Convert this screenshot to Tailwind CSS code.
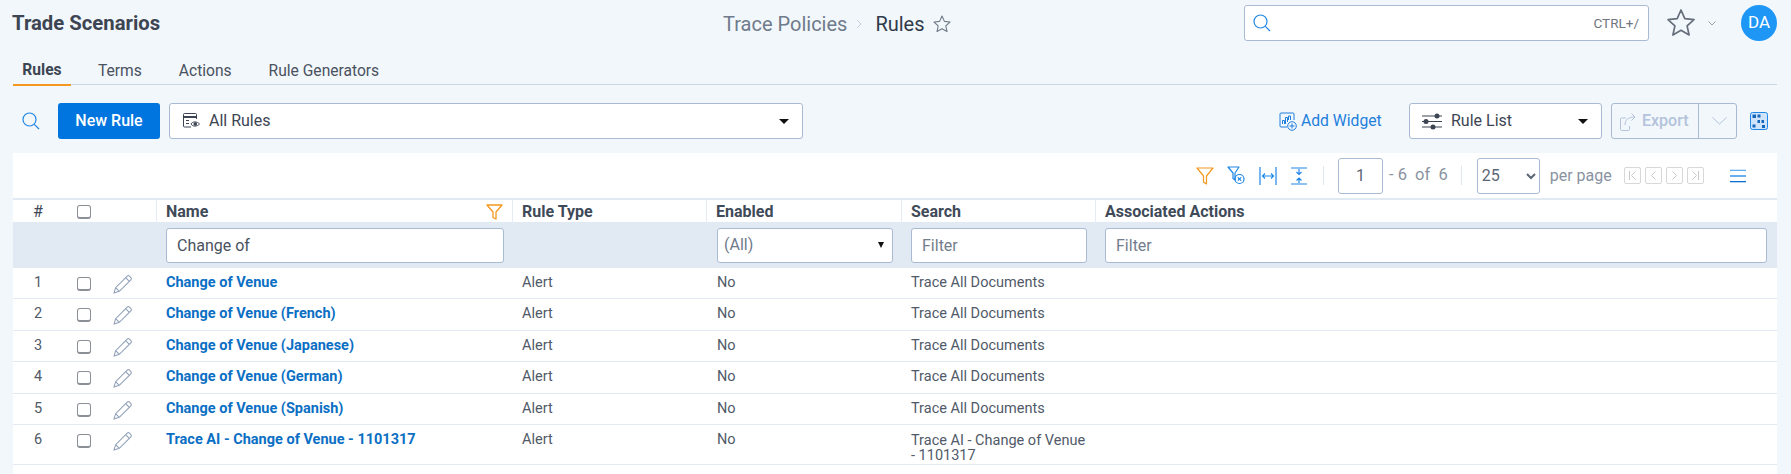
<!DOCTYPE html>
<html lang="en">
<head>
    <meta charset="UTF-8">
    <title>Trade Scenarios - Rules</title>
    <script src="https://cdn.jsdelivr.net/npm/@tailwindcss/browser@4"></script>
</head>
<body class="bg-[#f2f7fb] font-['Roboto',sans-serif] text-[#3d4553] overflow-hidden h-[474px]">
    <div class="pl-[13px] pr-[14px]">
        <!-- Top bar -->
        <header class="flex items-center h-[36px] mt-[5px]">
            <h1 class="w-[711px] -ml-px text-[20.3px] font-bold text-[#3d4553] whitespace-nowrap">Trade Scenarios</h1>
            <nav class="flex items-center w-[521px] text-[20px] pt-[1px]">
                <span class="text-[#6f7a8b]">Trace Policies</span>
                <svg class="w-[6px] h-[10px] ml-[9px] mr-[13px]" viewBox="0 0 6 10" fill="none" stroke="#c6d0de"><path d="M1 1l4 4-4 4"/></svg>
                <span class="text-[#2f3a4a]">Rules</span>
                <svg class="w-[18px] h-[18px] ml-[8px]" viewBox="0 0 18 18" fill="none" stroke="#717a88" stroke-width="1.1" stroke-linejoin="round"><path d="M9 1l2.4 5.4 5.6.6-4.2 3.8 1.2 5.7L9 13.7l-5 2.8 1.2-5.7L1 7l5.600-.6z"/></svg>
            </nav>
            <div class="flex items-center w-[405px] h-[36px] bg-white border border-[#a9bbd3] rounded-[3px] pl-[8px] pr-[9px]">
                <svg class="w-[18px] h-[18px] text-[#1f86e6]" viewBox="0 0 18 18" fill="none" stroke="currentColor" stroke-width="1.2"><circle cx="7.5" cy="7.5" r="6.5"/><path d="M12.3 12.3L17 17"/></svg>
                <span class="ml-auto text-[13.5px] text-[#6f7682]">CTRL+/</span>
            </div>
            <svg class="w-[30px] h-[30px] ml-[17px]" viewBox="0 0 30 30" fill="none" stroke="#666e7b" stroke-width="1.7" stroke-linejoin="round"><path d="M15 2l3.8 8.7 9.2 1-6.9 6.2 2 9.1-8.1-4.7L6.900 27l2-9.100L2 11.700l9.200-1z"/></svg>
            <svg class="w-[8px] h-[5px] ml-[12px]" viewBox="0 0 8 5" fill="none" stroke="#9aa3b0"><path d="M.5.5L4 4 7.500.5"/></svg>
            <div class="flex items-center justify-center w-[36px] h-[36px] ml-auto rounded-full bg-[#1e96f5] text-white text-[17px]">DA</div>
        </header>

        <!-- Tabs -->
        <div class="flex h-[44px] border-b border-[#c9d8e8] text-[15.6px] text-[#4a5260]">
            <a class="flex items-center justify-center w-[58px] pt-[16px] h-[45px] font-bold text-[#3d4553] border-b-2 border-[#f6981e]">Rules</a>
            <a class="flex items-center pt-[17px] h-[44px] ml-[27px]">Terms</a>
            <a class="flex items-center pt-[17px] h-[44px] ml-[37px]">Actions</a>
            <a class="flex items-center pt-[17px] h-[44px] ml-[37px]">Rule Generators</a>
        </div>

        <!-- Toolbar -->
        <div class="flex items-center h-[36px] mt-[18px]">
            <svg class="w-[18px] h-[18px] ml-[9px] text-[#1f86e6]" viewBox="0 0 18 18" fill="none" stroke="currentColor" stroke-width="1.2"><circle cx="7.500" cy="7.500" r="6.500"/><path d="M12.300 12.300L17 17"/></svg>
            <button class="w-[102px] h-[36px] ml-[18px] bg-[#0075df] text-white text-[16px] font-medium rounded-[3px]">New Rule</button>
            <div class="flex items-center w-[634px] h-[36px] ml-[9px] bg-white border border-[#a9bbd3] rounded-[3px] pl-[12px] pr-[13px] text-[16px]">
                <svg class="w-[19px] h-[18px] text-[#3d4553]" viewBox="0 0 19 18" fill="none" stroke="currentColor"><path d="M9 15H2.500a1 1 0 0 1-1-1V2.500a1 1 0 0 1 1-1h11a1 1 0 0 1 1 1V7"/><path d="M1.500 5h13" stroke-width="2"/><path d="M4 8.500h3M4 11.500h3"/><path d="M9 12c1.500-2.800 6-2.800 8.500 0-2.500 2.800-7 2.800-8.500 0z"/><circle cx="13.200" cy="12" r="1.300" fill="currentColor"/></svg>
                <span class="ml-[8px]">All Rules</span>
                <span class="ml-auto w-0 h-0 border-x-[5px] border-x-transparent border-t-[5px] border-t-[#111]"></span>
            </div>
            <svg class="w-[18px] h-[19px] ml-[476px] text-[#1f7fdc]" viewBox="0 0 18 19" fill="none" stroke="currentColor"><path d="M8 15H2a1 1 0 0 1-1-1V2a1 1 0 0 1 1-1h12a1 1 0 0 1 1 1v6"/><path d="M3.500 12V8.500h2V12M6.500 12V5.500h2V10M9.500 8V4h2v4" stroke-width="1"/><circle cx="13" cy="14" r="4.300"/><path d="M13 11.500v5M10.500 14h5"/></svg>
            <span class="ml-[4px] w-[108px] text-[15.7px] text-[#1f7fdc] whitespace-nowrap">Add Widget</span>
            <div class="flex items-center w-[193px] h-[36px] bg-white border border-[#a9bbd3] rounded-[3px] pl-[12px] pr-[13px] text-[16px]">
                <svg class="w-[20px] h-[17px] text-[#3d4553]" viewBox="0 0 20 17" fill="none" stroke="currentColor" stroke-width="1.200"><path d="M0 3h20M0 14h20M0 8.500h20"/><circle cx="15" cy="3" r="2.500" fill="currentColor" stroke="none"/><circle cx="4" cy="8.500" r="2.500" fill="currentColor" stroke="none"/><circle cx="11" cy="14" r="2.500" fill="currentColor" stroke="none"/></svg>
                <span class="ml-[9px]">Rule List</span>
                <span class="ml-auto w-0 h-0 border-x-[5px] border-x-transparent border-t-[5px] border-t-[#111]"></span>
            </div>
            <div class="flex items-center w-[126px] h-[36px] ml-[9px] border border-[#a9bbd3] rounded-[3px] text-[16px] text-[#b3c3db]">
                <div class="flex items-center w-[87px] h-full pl-[8px] border-r border-[#a9bbd3]">
                    <svg class="w-[16px] h-[19px]" viewBox="0 0 16 19" fill="none" stroke="currentColor"><path d="M6 6H1.500a1 1 0 0 0-1 1v10.500a1 1 0 0 0 1 1h7a1 1 0 0 0 1-1V14"/><path d="M5 13c0-5 3-8 10-8M11.500 1.500L15 5l-3.500 3.500"/></svg>
                    <span class="ml-[6px] font-medium">Export</span>
                </div>
                <svg class="w-[15px] h-[8px] ml-[13px]" viewBox="0 0 15 8" fill="none" stroke="currentColor"><path d="M.5.500L7.500 7l7-6.500"/></svg>
            </div>
            <svg class="w-[18px] h-[18px] ml-[13px]" viewBox="0 0 18 18"><rect x=".500" y=".500" width="17" height="17" rx="2" fill="#cfe4fb" stroke="#1f86e6"/><path d="M2.500 2.500h3.500v3.500H2.500zM7.500 2.500h3v3h-3zM11.500 8h2.500v3h-2.500zM7.500 8h2.500v3H7.500zM2.500 12.500h3v3h-3zM12 13h3v3h-3z" fill="#1565b8"/></svg>
        </div>

        <!-- Grid card -->
        <section class="mt-[14px] bg-white h-[321px]">
            <!-- Pager row -->
            <div class="flex items-center h-[47px] border-b-2 border-[#e1e9f3] pl-[1183px] text-[16px] text-[#8a93a1]">
                <svg class="w-[18px] h-[18px]" viewBox="0 0 18 18" fill="none" stroke="#f6981e" stroke-width="1.200" stroke-linejoin="round"><path d="M1 1h16l-6.500 8v8l-3-2V9z"/></svg>
                <svg class="w-[18px] h-[19px] ml-[13px] text-[#1f86e6]" viewBox="0 0 18 19" fill="none" stroke="currentColor" stroke-width="1.200" stroke-linejoin="round"><path d="M1 1h11L8 7v7l-2-1.500V7z"/><circle cx="12.500" cy="13" r="4.500"/><path d="M10.800 11.300l3.400 3.400M14.200 11.300l-3.400 3.400"/></svg>
                <svg class="w-[18px] h-[18px] ml-[14px] text-[#1f86e6]" viewBox="0 0 18 18" fill="none" stroke="currentColor" stroke-width="1.200"><path d="M1 0v18M17 0v18M4 9h10M6 6.500L3.500 9 6 11.500M12 6.500L14.500 9 12 11.500"/></svg>
                <svg class="w-[18px] h-[18px] ml-[13px] text-[#1f86e6]" viewBox="0 0 18 18" fill="none" stroke="currentColor" stroke-width="1.200"><path d="M1 1h16M1 17h16M9 2v5M9 11v5M6.500 5L9 7.500 11.500 5M6.500 13.500L9 11l2.500 2.500"/></svg>
                <span class="w-px h-[19px] ml-[15px] bg-[#dfe6ee]"></span>
                <input class="w-[45px] h-[36px] ml-[14px] text-center bg-white border border-[#a9bbd3] rounded-[3px] text-[#5c6675]" value="1">
                <span class="ml-[6px] text-[16.5px] whitespace-nowrap">- 6 &nbsp;of &nbsp;6</span>
                <span class="w-px h-[19px] ml-[13px] bg-[#dfe6ee]"></span>
                <select class="w-[63px] h-[36px] ml-[15px] bg-white border border-[#a9bbd3] rounded-[3px] text-[#5c6675]"><option>25</option></select>
                <span class="ml-[10px] whitespace-nowrap">per page</span>
                <div class="flex ml-[12px] gap-[4px]">
                    <span class="flex items-center justify-center w-[17px] h-[17px] border border-[#d8d8d8] rounded-[2px]"><svg class="w-[9px] h-[9px]" viewBox="0 0 9 9" fill="none" stroke="#c4c9d0"><path d="M1.500 0v9M7.500.5L3.500 4.500l4 4"/></svg></span>
                    <span class="flex items-center justify-center w-[17px] h-[17px] border border-[#d8d8d8] rounded-[2px]"><svg class="w-[9px] h-[9px]" viewBox="0 0 9 9" fill="none" stroke="#c4c9d0"><path d="M6.500.5L2.500 4.500l4 4"/></svg></span>
                    <span class="flex items-center justify-center w-[17px] h-[17px] border border-[#d8d8d8] rounded-[2px]"><svg class="w-[9px] h-[9px]" viewBox="0 0 9 9" fill="none" stroke="#c4c9d0"><path d="M2.500.5l4 4-4 4"/></svg></span>
                    <span class="flex items-center justify-center w-[17px] h-[17px] border border-[#d8d8d8] rounded-[2px]"><svg class="w-[9px] h-[9px]" viewBox="0 0 9 9" fill="none" stroke="#c4c9d0"><path d="M7.500 0v9M1.500.5l4 4-4 4"/></svg></span>
                </div>
                <svg class="w-[16px] h-[14px] ml-[26px]" viewBox="0 0 17 14" fill="none" stroke-width="1.400"><path d="M0 1h17" stroke="#62aef0"/><path d="M0 7h17" stroke="#1f86e6"/><path d="M0 13h17" stroke="#0b6fd6"/></svg>
            </div>

            <!-- Column headers -->
            <div class="grid grid-cols-[50px_43px_50px_356px_194px_195px_194px_1fr] items-center h-[22px] text-[16px] font-bold text-[#3f4a59]">
                <span class="text-center font-normal">#</span>
                <span class="pl-[14px] flex"><input type="checkbox" class="appearance-none w-[14px] h-[14px] rounded-[3px] border border-[#8b8f96] border-b-2 bg-white"></span>
                <span></span>
                <span class="flex items-center h-full pl-[9px] pr-[9px] border-l border-[#e6ecf3]">Name<svg class="w-[17px] h-[16px] ml-auto" viewBox="0 0 17 16" fill="none" stroke="#f6981e" stroke-width="1.300" stroke-linejoin="round"><path d="M1 1h15l-6 7v7l-3-1.500V8z"/></svg></span>
                <span class="flex items-center h-full pl-[9px] border-l border-[#e6ecf3]">Rule Type</span>
                <span class="flex items-center h-full pl-[9px] border-l border-[#e6ecf3]">Enabled</span>
                <span class="flex items-center h-full pl-[9px] border-l border-[#e6ecf3]">Search</span>
                <span class="flex items-center h-full pl-[9px] border-l border-[#e6ecf3]">Associated Actions</span>
            </div>

            <!-- Filter row -->
            <div class="grid grid-cols-[50px_43px_50px_356px_194px_195px_194px_1fr] items-center h-[46px] bg-[#e1e9f3] text-[16px]">
                <span class="col-start-4 pl-[10px] pr-[8px]"><input class="w-full h-[35px] px-[10px] bg-white border border-[#a9bbd3] rounded-[3px] text-[#4a5260]" value="Change of"></span>
                <span class="col-start-6 pl-[11px] pr-[8px]"><span class="flex items-center h-[35px] pl-[6px] pr-[8px] bg-white border border-[#a9bbd3] rounded-[3px] text-[#6f7a8b]">(All)<span class="ml-auto w-0 h-0 border-x-[3.500px] border-x-transparent border-t-[6px] border-t-[#111]"></span></span></span>
                <span class="pl-[10px] pr-[8px]"><input class="w-full h-[35px] px-[10px] bg-white border border-[#a9bbd3] rounded-[3px] placeholder:text-[#737d8c]" placeholder="Filter"></span>
                <span class="pl-[10px] pr-[10px]"><input class="w-full h-[35px] px-[10px] bg-white border border-[#a9bbd3] rounded-[3px] placeholder:text-[#737d8c]" placeholder="Filter"></span>
            </div>

            <!-- Rows -->
            <div class="text-[14.5px] text-[#505a68]">
                <div class="grid grid-cols-[50px_43px_50px_356px_194px_195px_194px_1fr] h-[31.4px] pt-[6px] leading-[18px] border-b border-[#e1e9f3]">
                    <span class="text-center">1</span>
                    <span class="pl-[14px] flex pt-[3px]"><input type="checkbox" class="appearance-none w-[14px] h-[14px] rounded-[3px] border border-[#8b8f96] border-b-2 bg-white"></span>
                    <svg class="w-[20px] h-[20px] ml-[7px]" viewBox="0 0 19 19" fill="none" stroke="#8fa0b8"><path d="M1 18l1.500-5L13.500 2a1.500 1.500 0 0 1 2.100 0l1.400 1.400a1.500 1.500 0 0 1 0 2.100L6 16.500zM2.500 13L6 16.500M12 3.500L15.500 7"/></svg>
                    <a class="pl-[10px] font-bold text-[#0b6fc4]">Change of Venue</a>
                    <span class="pl-[10px]">Alert</span>
                    <span class="pl-[11px]">No</span>
                    <span class="pl-[10px]">Trace All Documents</span>
                </div>
                <div class="grid grid-cols-[50px_43px_50px_356px_194px_195px_194px_1fr] h-[31.4px] pt-[6px] leading-[18px] border-b border-[#e1e9f3]">
                    <span class="text-center">2</span>
                    <span class="pl-[14px] flex pt-[3px]"><input type="checkbox" class="appearance-none w-[14px] h-[14px] rounded-[3px] border border-[#8b8f96] border-b-2 bg-white"></span>
                    <svg class="w-[20px] h-[20px] ml-[7px]" viewBox="0 0 19 19" fill="none" stroke="#8fa0b8"><path d="M1 18l1.500-5L13.500 2a1.500 1.500 0 0 1 2.100 0l1.400 1.400a1.500 1.500 0 0 1 0 2.100L6 16.500zM2.500 13L6 16.500M12 3.500L15.500 7"/></svg>
                    <a class="pl-[10px] font-bold text-[#0b6fc4]">Change of Venue (French)</a>
                    <span class="pl-[10px]">Alert</span>
                    <span class="pl-[11px]">No</span>
                    <span class="pl-[10px]">Trace All Documents</span>
                </div>
                <div class="grid grid-cols-[50px_43px_50px_356px_194px_195px_194px_1fr] h-[31.4px] pt-[6px] leading-[18px] border-b border-[#e1e9f3]">
                    <span class="text-center">3</span>
                    <span class="pl-[14px] flex pt-[3px]"><input type="checkbox" class="appearance-none w-[14px] h-[14px] rounded-[3px] border border-[#8b8f96] border-b-2 bg-white"></span>
                    <svg class="w-[20px] h-[20px] ml-[7px]" viewBox="0 0 19 19" fill="none" stroke="#8fa0b8"><path d="M1 18l1.500-5L13.500 2a1.500 1.500 0 0 1 2.100 0l1.400 1.400a1.500 1.500 0 0 1 0 2.100L6 16.500zM2.500 13L6 16.500M12 3.500L15.500 7"/></svg>
                    <a class="pl-[10px] font-bold text-[#0b6fc4]">Change of Venue (Japanese)</a>
                    <span class="pl-[10px]">Alert</span>
                    <span class="pl-[11px]">No</span>
                    <span class="pl-[10px]">Trace All Documents</span>
                </div>
                <div class="grid grid-cols-[50px_43px_50px_356px_194px_195px_194px_1fr] h-[31.4px] pt-[6px] leading-[18px] border-b border-[#e1e9f3]">
                    <span class="text-center">4</span>
                    <span class="pl-[14px] flex pt-[3px]"><input type="checkbox" class="appearance-none w-[14px] h-[14px] rounded-[3px] border border-[#8b8f96] border-b-2 bg-white"></span>
                    <svg class="w-[20px] h-[20px] ml-[7px]" viewBox="0 0 19 19" fill="none" stroke="#8fa0b8"><path d="M1 18l1.500-5L13.500 2a1.500 1.500 0 0 1 2.100 0l1.400 1.400a1.500 1.500 0 0 1 0 2.100L6 16.500zM2.500 13L6 16.500M12 3.500L15.500 7"/></svg>
                    <a class="pl-[10px] font-bold text-[#0b6fc4]">Change of Venue (German)</a>
                    <span class="pl-[10px]">Alert</span>
                    <span class="pl-[11px]">No</span>
                    <span class="pl-[10px]">Trace All Documents</span>
                </div>
                <div class="grid grid-cols-[50px_43px_50px_356px_194px_195px_194px_1fr] h-[31.4px] pt-[6px] leading-[18px] border-b border-[#e1e9f3]">
                    <span class="text-center">5</span>
                    <span class="pl-[14px] flex pt-[3px]"><input type="checkbox" class="appearance-none w-[14px] h-[14px] rounded-[3px] border border-[#8b8f96] border-b-2 bg-white"></span>
                    <svg class="w-[20px] h-[20px] ml-[7px]" viewBox="0 0 19 19" fill="none" stroke="#8fa0b8"><path d="M1 18l1.500-5L13.500 2a1.500 1.500 0 0 1 2.100 0l1.400 1.400a1.500 1.500 0 0 1 0 2.100L6 16.500zM2.500 13L6 16.500M12 3.500L15.500 7"/></svg>
                    <a class="pl-[10px] font-bold text-[#0b6fc4]">Change of Venue (Spanish)</a>
                    <span class="pl-[10px]">Alert</span>
                    <span class="pl-[11px]">No</span>
                    <span class="pl-[10px]">Trace All Documents</span>
                </div>
                <div class="grid grid-cols-[50px_43px_50px_356px_194px_195px_194px_1fr] h-[40px] pt-[6px] leading-[15px] border-b border-[#e1e9f3]">
                    <span class="text-center leading-[18px]">6</span>
                    <span class="pl-[14px] flex pt-[3px]"><input type="checkbox" class="appearance-none w-[14px] h-[14px] rounded-[3px] border border-[#8b8f96] border-b-2 bg-white"></span>
                    <svg class="w-[20px] h-[20px] ml-[7px]" viewBox="0 0 19 19" fill="none" stroke="#8fa0b8"><path d="M1 18l1.500-5L13.500 2a1.500 1.500 0 0 1 2.100 0l1.400 1.400a1.500 1.500 0 0 1 0 2.100L6 16.500zM2.500 13L6 16.500M12 3.500L15.500 7"/></svg>
                    <a class="pl-[10px] font-bold text-[#0b6fc4] leading-[18px]">Trace AI - Change of Venue - 1101317</a>
                    <span class="pl-[10px] leading-[18px]">Alert</span>
                    <span class="pl-[11px] leading-[18px]">No</span>
                    <span class="pl-[10px] pr-[8px] pt-[2px]">Trace AI - Change of Venue - 1101317</span>
                </div>
            </div>
        </section>
    </div>
</body>
</html>
